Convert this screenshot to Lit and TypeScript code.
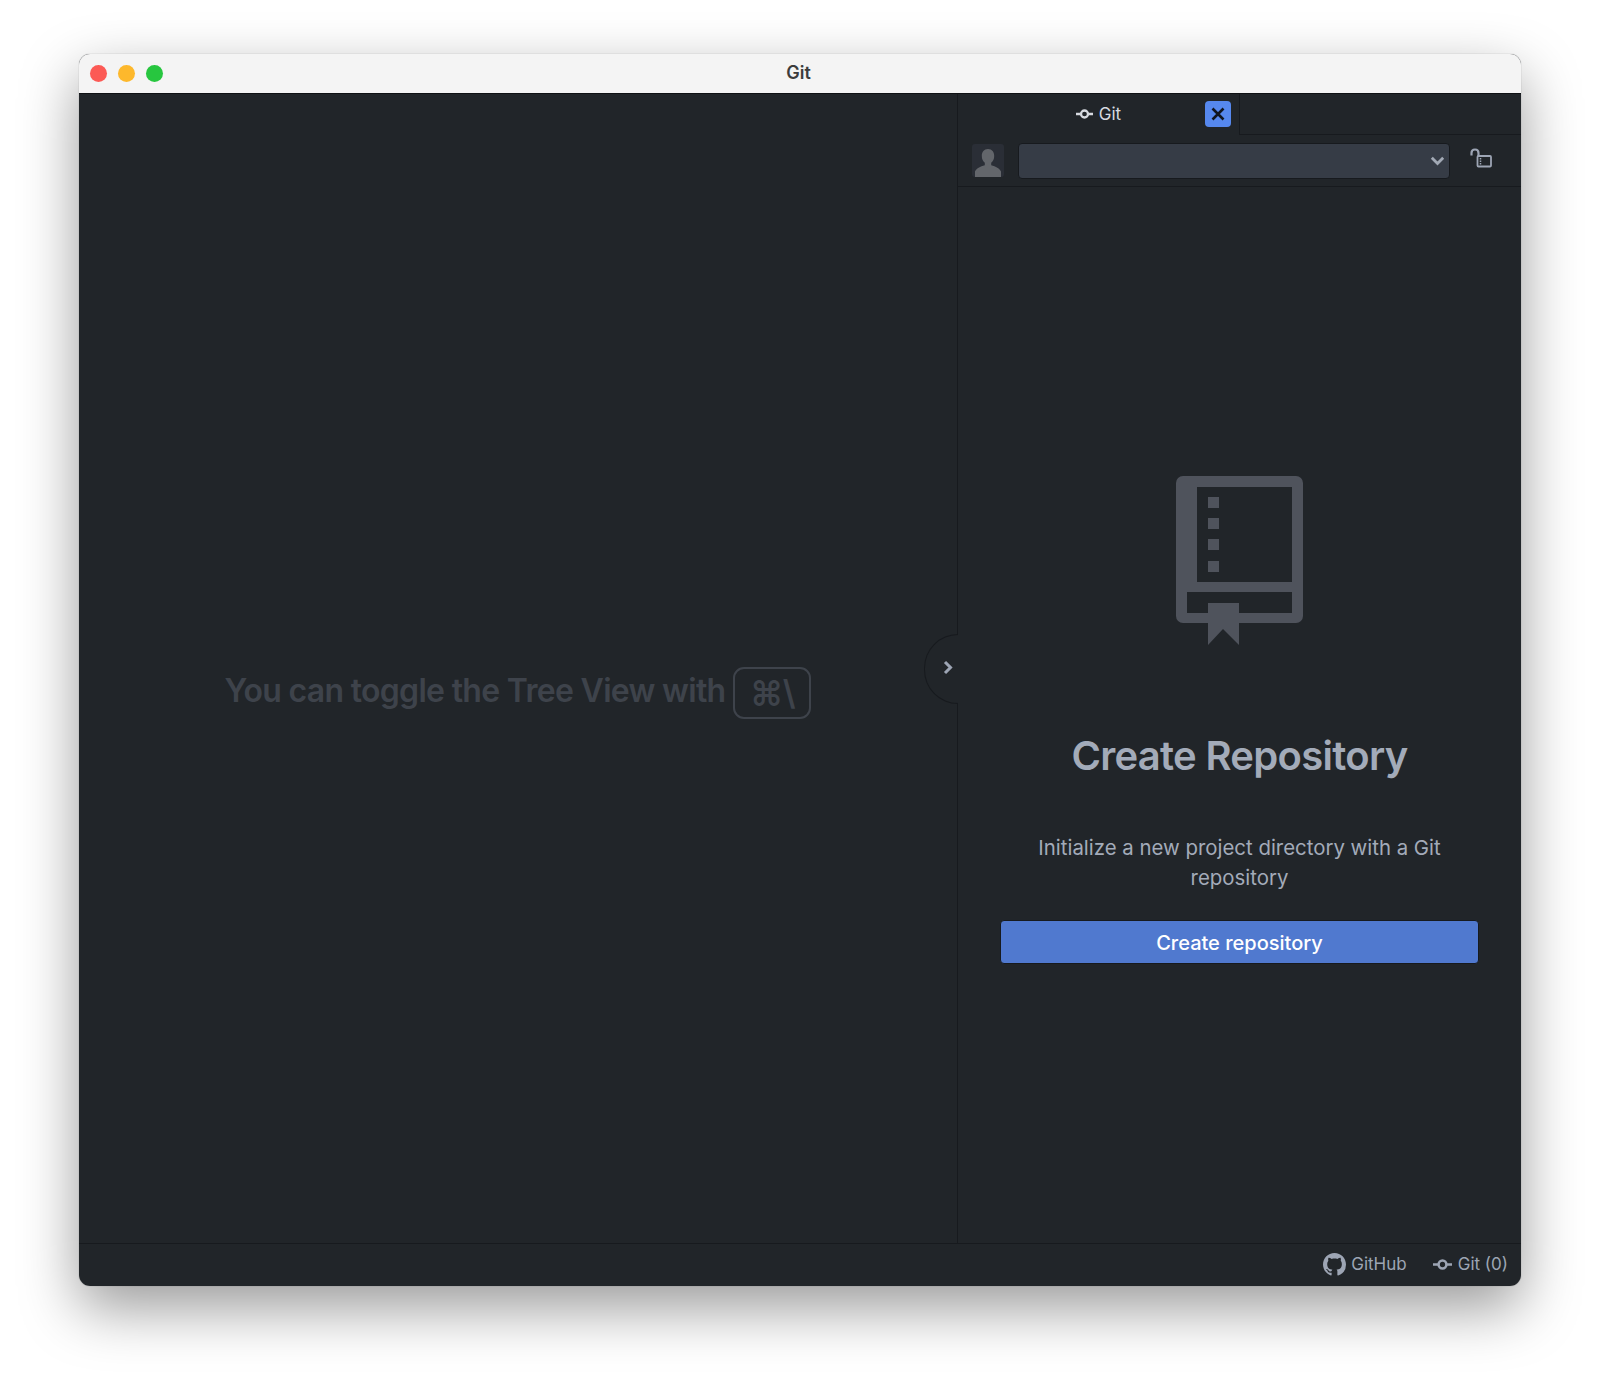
import { LitElement, html, css } from "lit";
import { customElement } from "lit/decorators.js";

const commit = html`<svg class="commit" viewBox="0 0 18 10" aria-hidden="true"><path d="M0 5h5M13 5h5" stroke="currentColor" stroke-width="2.500" fill="none"/><circle cx="9" cy="5" r="3.700" stroke="currentColor" stroke-width="2.400" fill="none"/></svg>`;

@customElement("app-root")
export class AppRoot extends LitElement {
  static styles = css`
    :host { display: block; height: 1390px; box-sizing: border-box; padding: 54px 79px 104px 79px; background: #fff; font-family: Inter, "Liberation Sans", sans-serif; overflow: hidden; }
    .window { height: 100%; display: flex; flex-direction: column; border-radius: 11px; overflow: hidden; background: #212529; }
    .shadow { height: 100%; border-radius: 11px; box-shadow: 0 22px 58px rgba(0,0,0,.4), 0 0 1px rgba(0,0,0,.45); }
    .titlebar { height: 40px; flex: none; box-sizing: border-box; background: #f4f4f4; border-bottom: 1px solid #0f1114; position: relative; display: flex; align-items: center; justify-content: center; color: #3c3c3c; font-size: 18px; font-weight: 600; padding: 0 3px 2px 0; }
    .lights { position: absolute; left: 11px; top: 11px; display: flex; gap: 11px; }
    .light { width: 17px; height: 17px; border-radius: 50%; }
    .red { background: #fc5a55; } .yellow { background: #fdb82c; } .green { background: #27c63f; }
    .body { flex: 1; min-height: 0; display: flex; }
    .main { width: 878px; flex: none; display: flex; align-items: center; justify-content: center; position: relative; padding-top: 44px; box-sizing: border-box; }
    .hint { display: flex; align-items: center; gap: 8px; color: #3e434b; font-size: 32px; font-weight: 600; letter-spacing: -0.7px; }
    .kbd { width: 74px; height: 48px; border: 2px solid #3e434b; border-radius: 11px; display: flex; align-items: center; justify-content: center; font-size: 34px; font-weight: 600; margin-top: 4px; }
    .toggle { position: absolute; left: 845px; top: 540px; width: 34px; height: 70px; box-sizing: border-box; border: 1px solid #171a1e; border-right: 0; border-radius: 35px 0 0 35px; background: #212529; display: flex; align-items: center; justify-content: center; padding: 0 0 3px 12px; color: #9da5b4; }
    .toggle svg { width: 10px; height: 15px; }
    .panel { flex: 1; min-width: 0; display: flex; flex-direction: column; border-left: 1px solid #171a1e; }
    .tabs { height: 41px; flex: none; box-sizing: border-box; border-bottom: 1px solid #171a1e; }
    .tab { width: 282px; height: 41px; box-sizing: border-box; border-right: 1px solid #171a1e; background: #212529; position: relative; display: flex; align-items: center; justify-content: center; color: #d7dae0; font-size: 17px; gap: 6px; padding-bottom: 2px; }
    .tab .commit { width: 17px; height: 10px; }
    .close { position: absolute; left: 247px; top: 7px; width: 26px; height: 26px; border-radius: 4px; background: #5688ee; display: flex; align-items: center; justify-content: center; }
    .close svg { width: 14px; height: 14px; }
    .toolbar { height: 52px; flex: none; box-sizing: border-box; border-bottom: 1px solid #171a1e; display: flex; align-items: center; padding: 0 0 0 14px; }
    .avatar { width: 32px; height: 33px; background: #2a2e36; border-radius: 3px; overflow: hidden; flex: none; }
    .avatar svg { display: block; width: 32px; height: 33px; }
    .select { width: 432px; height: 36px; margin-left: 14px; box-sizing: border-box; background: #363c46; border: 1px solid #171a1e; border-radius: 4px; display: flex; align-items: center; justify-content: flex-end; padding-right: 4px; color: #a2a9b5; flex: none; }
    .select svg { width: 15px; height: 10px; }
    .lock { width: 22px; height: 20px; margin-left: 20px; margin-top: -6px; flex: none; color: #9da5b4; }
    .content { flex: 1; min-height: 0; display: flex; flex-direction: column; align-items: center; padding-top: 288px; box-sizing: border-box; }
    .book { width: 128px; height: 170px; display: block; flex: none; }
    h1 { margin: 83px 0 0; color: #a3abb9; font-size: 40px; line-height: 56px; font-weight: 600; letter-spacing: -0.7px; }
    p { margin: 49px 0 0; width: 480px; text-align: center; color: #a3abb9; font-size: 20.400px; line-height: 29.600px; }
    .button { margin-top: 28px; width: 479px; height: 44px; box-sizing: border-box; background: #5079cf; border: 1px solid #171a1e; border-radius: 4px; color: #fff; font-size: 20px; font-weight: 500; display: flex; align-items: center; justify-content: center; padding-top: 1px; }
    .status { height: 43px; flex: none; box-sizing: border-box; border-top: 1px solid #171a1e; display: flex; align-items: center; justify-content: flex-end; padding: 0 13px 2px 0; color: #9da5b4; font-size: 17px; }
    .item { display: flex; align-items: center; }
    .item.gh { gap: 5px; margin-right: 26px; }
    .gh svg { width: 23px; height: 23px; }
    .item.git { gap: 6px; }
    .item .commit { width: 19px; height: 11px; }
  `;

  render() {
    return html`
      <div class="shadow">
        <div class="window">
          <div class="titlebar">
            <div class="lights"><span class="light red"></span><span class="light yellow"></span><span class="light green"></span></div>
            Git
          </div>
          <div class="body">
            <div class="main">
              <div class="hint">You can toggle the Tree View with <span class="kbd">⌘\\</span></div>
              <div class="toggle"><svg viewBox="0 0 10 15"><path d="M2 2l5.500 5.500-5.500 5.500" fill="none" stroke="currentColor" stroke-width="3"/></svg></div>
            </div>
            <div class="panel">
              <div class="tabs">
                <div class="tab">${commit}<span>Git</span>
                  <span class="close"><svg viewBox="0 0 14 14"><path d="M1.500 1.500l11 11M12.500 1.500l-11 11" stroke="#10151f" stroke-width="2.600" fill="none"/></svg></span>
                </div>
              </div>
              <div class="toolbar">
                <div class="avatar"><svg viewBox="0 0 32 33"><path fill="#63666b" d="M16 5c4 0 6.200 3 6.200 7 0 3-1.200 5.400-3 6.800v2.400c4.500 1.200 8.600 3.200 9.800 6.300V33H3v-5.500c1.200-3.100 5.300-5.100 9.800-6.300v-2.400c-1.800-1.400-3-3.800-3-6.800 0-4 2.200-7 6.200-7z"/></svg></div>
                <div class="select"><svg viewBox="0 0 15 10"><path d="M1.800 1.800L7.500 7.500 13.200 1.800" fill="none" stroke="currentColor" stroke-width="2.800"/></svg></div>
                <svg class="lock" viewBox="0 0 22 20" fill="none" stroke="currentColor"><path d="M1.500 7.500V5c0-2 1.500-3.500 3.500-3.500S8.500 3 8.500 5v3" stroke-width="2.200"/><rect x="7.500" y="8" width="13.500" height="10.500" rx="1" stroke-width="1.800"/><path d="M10.500 10v7" stroke-width="1.500" stroke-dasharray="1.500 1"/></svg>
              </div>
              <div class="content">
                <svg class="book" viewBox="0 0 128 170">
                  <path fill="#4f535c" fill-rule="evenodd" d="M7 1h113a7 7 0 0 1 7 7v133a7 7 0 0 1-7 7H63v22l-16-16-15 16v-22H7a7 7 0 0 1-7-7V8a7 7 0 0 1 7-7zM21 12v95h95V12zM11 117v21h21v-10h31v10h53v-21z"/>
                  <path fill="#4f535c" d="M32 22h11v11H32zM32 43h11v11H32zM32 64h11v11H32zM32 86h11v11H32z"/>
                </svg>
                <h1>Create Repository</h1>
                <p>Initialize a new project directory with a Git repository</p>
                <div class="button">Create repository</div>
              </div>
            </div>
          </div>
          <div class="status">
            <div class="item gh"><svg viewBox="0 0 16 16"><path fill="currentColor" d="M8 0C3.580 0 0 3.580 0 8c0 3.540 2.290 6.530 5.470 7.590.4.070.55-.17.55-.38 0-.19-.010-.82-.010-1.490-2.010.370-2.530-.490-2.690-.940-.090-.230-.480-.940-.820-1.130-.280-.150-.680-.520-.010-.530.630-.010 1.080.580 1.230.820.720 1.210 1.870.870 2.330.660.070-.520.280-.870.510-1.070-1.780-.200-3.640-.890-3.640-3.950 0-.870.310-1.590.820-2.150-.080-.200-.360-1.020.080-2.120 0 0 .670-.210 2.200.820.640-.180 1.320-.270 2-.270s1.360.090 2 .270c1.530-1.040 2.200-.820 2.200-.820.440 1.100.160 1.920.080 2.120.510.560.820 1.270.820 2.150 0 3.070-1.870 3.750-3.650 3.950.290.250.540.730.540 1.480 0 1.070-.010 1.930-.010 2.200 0 .210.150.460.550.380A8.013 8.013 0 0 0 16 8c0-4.420-3.580-8-8-8z"/></svg><span>GitHub</span></div>
            <div class="item git">${commit}<span>Git (0)</span></div>
          </div>
        </div>
      </div>
    `;
  }
}
